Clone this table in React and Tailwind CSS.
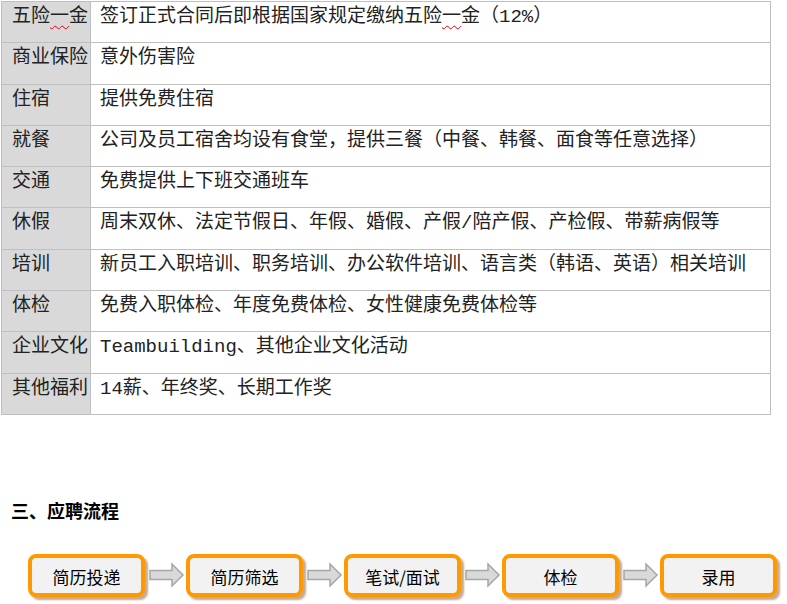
const rows = [
  ["五险一金", null],
  ["商业保险", "意外伤害险"],
  ["住宿", "提供免费住宿"],
  ["就餐", "公司及员工宿舍均设有食堂，提供三餐（中餐、韩餐、面食等任意选择）"],
  ["交通", "免费提供上下班交通班车"],
  ["休假", "周末双休、法定节假日、年假、婚假、产假/陪产假、产检假、带薪病假等"],
  ["培训", "新员工入职培训、职务培训、办公软件培训、语言类（韩语、英语）相关培训"],
  ["体检", "免费入职体检、年度免费体检、女性健康免费体检等"],
  ["企业文化", "Teambuilding、其他企业文化活动"],
  ["其他福利", "14薪、年终奖、长期工作奖"],
]

const steps = ["简历投递", "简历筛选", "笔试/面试", "体检", "录用"]

export default function App() {
  return (
    <div className="w-[787px] h-[604px] bg-white overflow-hidden text-[#222]">
      <table
        className="ml-px mt-px w-[770px] border-collapse text-[19px] leading-[24px]"
        style={{ fontFamily: '"Liberation Mono", "Noto Sans CJK SC", monospace' }}
      >
        <tbody>
          {rows.map(([label, text]) => (
            <tr key={label} className="h-[41.3px]">
              <td className="w-[89px] align-top border border-[#bfbfbf] bg-[#d9d9d9] pl-[10px] pt-[3px] whitespace-nowrap">
                {label === "五险一金" ? <WuXian /> : label}
              </td>
              <td className="align-top border border-[#bfbfbf] pl-[9px] pt-[3px] whitespace-nowrap">
                {text === null ? (
                  <>
                    签订正式合同后即根据国家规定缴纳五险
                    <span className="underline decoration-wavy decoration-red-600 decoration-1 underline-offset-[3px]">一</span>
                    金（12%）
                  </>
                ) : (
                  text
                )}
              </td>
            </tr>
          ))}
        </tbody>
      </table>

      <h2
        className="ml-[11px] mt-[83px] text-[18px] font-bold leading-[24px] text-black"
        style={{ fontFamily: '"Noto Sans CJK SC", sans-serif' }}
      >
        三、应聘流程
      </h2>

      <div className="ml-[28px] mt-[32px] flex items-center">
        {steps.map((s, i) => (
          <div key={s} className="flex items-center">
            <Step label={s} />
            {i < steps.length - 1 && <Arrow />}
          </div>
        ))}
      </div>
    </div>
  )
}

function WuXian() {
  return (
    <>
      五险
      <span className="underline decoration-wavy decoration-red-600 decoration-1 underline-offset-[3px]">一</span>
      金
    </>
  )
}

function Step({ label }) {
  return (
    <div
      className="w-[117px] h-[43px] rounded-[8px] border-[4px] border-[#ff9900] bg-[#f2f2f2] flex items-center justify-center pt-[3px] text-[17px] text-black shadow-[3px_3px_2px_rgba(150,100,60,0.55)]"
      style={{ fontFamily: '"Noto Sans CJK SC", sans-serif' }}
    >
      {label}
    </div>
  )
}

function Arrow() {
  return (
    <svg width="41" height="26" viewBox="0 0 41 26" className="shrink-0">
      <path
        d="M5 8.5 H27 V2 L38 13 L27 24 V17.5 H5 Z"
        fill="#d9d9d9"
        stroke="#a6a6a6"
        strokeWidth="1.5"
        strokeLinejoin="miter"
      />
    </svg>
  )
}
